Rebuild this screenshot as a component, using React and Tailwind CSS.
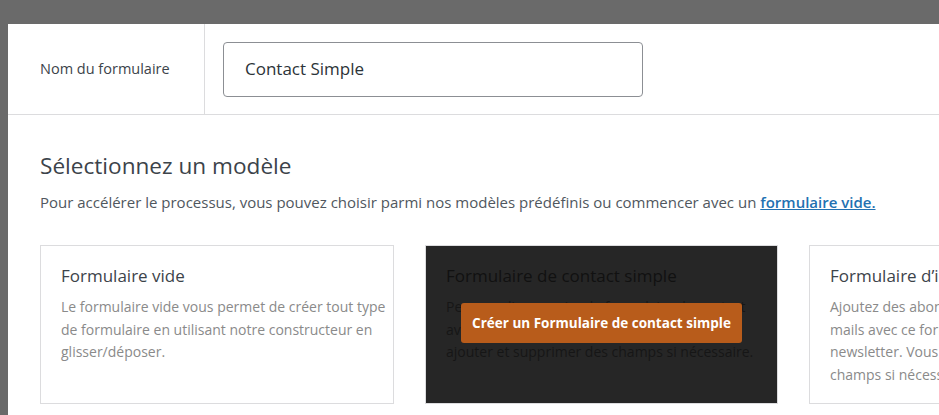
export default function App() {
  const font = { fontFamily: '"Open Sans", "Noto Sans", sans-serif' };
  return (
    <div className="w-[939px] h-[415px] bg-[#6a6a6a] overflow-hidden pt-[24px] pl-[8px]" style={font}>
      <div className="bg-white h-full w-[960px] overflow-hidden">
        {/* Nom du formulaire */}
        <div className="flex h-[91px] border-b border-[#dcdcde]">
          <div className="w-[197px] border-r border-[#dcdcde] flex items-center pl-[32px] text-[14.5px] text-[#3c434a]">
            Nom du formulaire
          </div>
          <div className="flex items-center pl-[18px]">
            <div className="w-[420px] h-[55px] border border-[#8c8f94] rounded-[4px] flex items-center px-[21px] text-[17px] text-[#2c3338]">
              Contact Simple
            </div>
          </div>
        </div>

        <div className="pl-[32px] pt-[36px]">
          <h2 className="text-[22.6px] leading-[30px] text-[#3c434a]">Sélectionnez un modèle</h2>
          <p className="mt-[10px] text-[15px] text-[#50575e]">
            Pour accélérer le processus, vous pouvez choisir parmi nos modèles prédéfinis ou commencer avec un{" "}
            <a className="font-semibold text-[#2271b1] underline">formulaire vide.</a>
          </p>

          <div className="flex gap-[31px] mt-[31px]">
            <div className="w-[354px] h-[159px] shrink-0 border border-[#dcdcde] pl-[20px] pr-[4px] pt-[17px]">
              <div className="text-[17px] text-[#3c434a]">Formulaire vide</div>
              <p className="mt-[8px] text-[14px] leading-[22.5px] text-[#8a8a8a]">
                Le formulaire vide vous permet de créer tout type de formulaire en utilisant notre constructeur en glisser/déposer.
              </p>
            </div>

            <div className="relative w-[353px] h-[159px] shrink-0 border border-[#dcdcde] bg-[#262626] pl-[20px] pr-[4px] pt-[17px]">
              <div className="text-[17px] text-[#111]">Formulaire de contact simple</div>
              <p className="mt-[8px] text-[14px] leading-[22.5px] text-[#161616] whitespace-nowrap">
                Personnalisez ce simple formulaire de contact
                <br />
                avec nom, e-mail et message. Vous pouvez
                <br />
                ajouter et supprimer des champs si nécessaire.
              </p>
              <div className="absolute inset-0 flex items-center justify-center">
                <button className="mt-[-2px] h-[40px] px-[11px] rounded-[3px] bg-[#b85c1b] text-white text-[13.5px] font-bold">
                  Créer un Formulaire de contact simple
                </button>
              </div>
            </div>

            <div className="w-[354px] h-[159px] shrink-0 border border-[#dcdcde] pl-[20px] pr-[4px] pt-[17px]">
              <div className="text-[17px] text-[#3c434a] whitespace-nowrap">Formulaire d’inscription à la newsletter</div>
              <p className="mt-[8px] text-[14px] leading-[22.5px] text-[#8a8a8a] whitespace-nowrap">
                Ajoutez des abonnés et développez votre liste d’e-
                <br />
                mails avec ce formulaire d’inscription à la
                <br />
                newsletter. Vous pouvez ajouter et supprimer des
                <br />
                champs si nécessaire.
              </p>
            </div>
          </div>
        </div>
      </div>
    </div>
  );
}
